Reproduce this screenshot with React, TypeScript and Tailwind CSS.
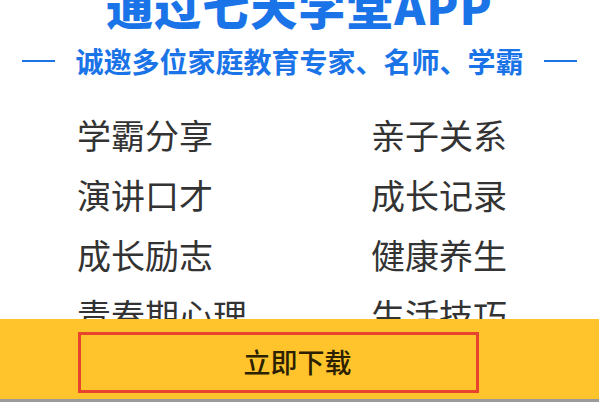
import React from 'react';

const leftItems = ['学霸分享', '演讲口才', '成长励志', '青春期心理'];
const rightItems = ['亲子关系', '成长记录', '健康养生', '生活技巧'];

const App: React.FC = () => {
  return (
    <div
      className="relative w-[599px] h-[402px] overflow-hidden bg-white"
      style={{ fontFamily: '"Noto Sans CJK SC", "Noto Sans", sans-serif' }}
    >
      {/* Title, clipped at the top */}
      <h1 className="-mt-[19px] text-center text-[47px] leading-none font-black tracking-[1px] text-[#1a74e8]">
        通过七天学堂APP
      </h1>

      {/* Subtitle */}
      <div className="mt-[19px] flex items-center justify-center text-[#1a74e8]">
        <span className="w-[33px] h-[2px] bg-[#1a74e8]" />
        <p className="mx-[20px] text-[28px] leading-[28px] font-bold">
          诚邀多位家庭教育专家、名师、学霸
        </p>
        <span className="w-[33px] h-[2px] bg-[#1a74e8]" />
      </div>

      {/* Topics */}
      <div className="mt-[30px] grid grid-cols-[294px_1fr] pl-[77px] text-[34px] leading-[60px] text-[#333333]">
        {leftItems.map((item, i) => (
          <React.Fragment key={item}>
            <span>{item}</span>
            <span>{rightItems[i]}</span>
          </React.Fragment>
        ))}
      </div>

      {/* Bottom download bar */}
      <div className="absolute bottom-0 left-0 right-0 h-[83px] bg-[#ffc42c] border-b-[3px] border-[#9a9a9a] pt-[13px] pl-[78px]">
        <button className="w-[401px] h-[61px] border-[3px] border-[#e8432c] flex items-center justify-center pl-[38px] text-[27px] font-medium text-[#2b2100]">
          立即下载
        </button>
      </div>
    </div>
  );
};

export default App;
